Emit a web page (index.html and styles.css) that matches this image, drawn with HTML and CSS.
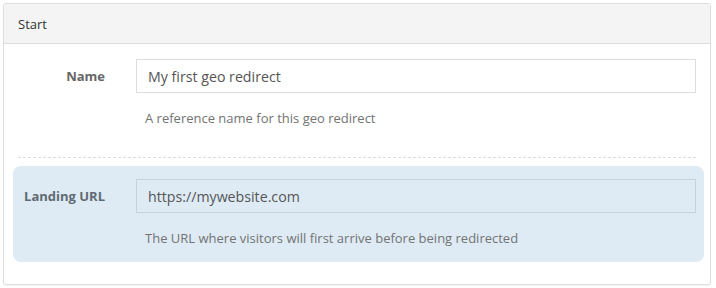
FILE: index.html
```html
<!DOCTYPE html>
<html>
<head>
<meta charset="utf-8">
<link rel="stylesheet" href="styles.css">
</head>
<body>
<div class="panel">
  <div class="panel-heading">Start</div>
  <div class="panel-body">
    <div class="group">
      <label class="label">Name</label>
      <div class="field">
        <div class="input">My first geo redirect</div>
        <div class="help">A reference name for this geo redirect</div>
      </div>
    </div>
    <div class="divider"></div>
    <div class="group highlight">
      <label class="label">Landing URL</label>
      <div class="field">
        <div class="input">https://mywebsite.com</div>
        <div class="help">The URL where visitors will first arrive before being redirected</div>
      </div>
    </div>
  </div>
</div>
</body>
</html>
```
FILE: styles.css
```css
html, body {
  margin: 0;
  padding: 0;
  background: #ffffff;
}
body {
  padding: 3px 5px 3px 3px;
  font-family: "Open Sans", "Noto Sans", sans-serif;
  color: #333;
}
.panel {
  border: 1px solid #dddddd;
  border-radius: 3px;
  box-sizing: border-box;
  height: 282px;
  box-shadow: 0 1px 1px rgba(0,0,0,0.05);
}
.panel-heading {
  background: #f4f4f4;
  border-bottom: 1px solid #dddddd;
  border-radius: 3px 3px 0 0;
  height: 40px;
  box-sizing: border-box;
  padding: 0 14px;
  display: flex;
  align-items: center;
  font-size: 13px;
  color: #333;
}
.panel-body {
  padding: 2px 6px 0 9px;
}
.group {
  display: flex;
  align-items: flex-start;
  padding: 13px 8px 14px 12px;
  border-radius: 8px;
}
.highlight {
  background: #deebf5;
}
.label {
  width: 80px;
  flex: none;
  height: 34px;
  display: flex;
  align-items: center;
  justify-content: flex-end;
  white-space: nowrap;
  font-size: 13px;
  font-weight: 700;
  color: #666;
  margin-right: 31px;
}
.highlight .label {
  color: #5f6a72;
}
.field {
  flex: 1;
}
.input {
  height: 34px;
  box-sizing: border-box;
  border: 1px solid #dddddd;
  padding: 0 11px;
  display: flex;
  align-items: center;
  font-size: 14.2px;
  color: #555;
  background: #fff;
}
.highlight .input {
  background: #deebf5;
  border-color: #c3d2dd;
}
.help {
  margin-top: 15px;
  padding-left: 9px;
  line-height: 20px;
  font-size: 13px;
  color: #737373;
}
.divider {
  margin: 15px 8px 8px 5px;
  border-top: 1px dashed #dddddd;
}
```
